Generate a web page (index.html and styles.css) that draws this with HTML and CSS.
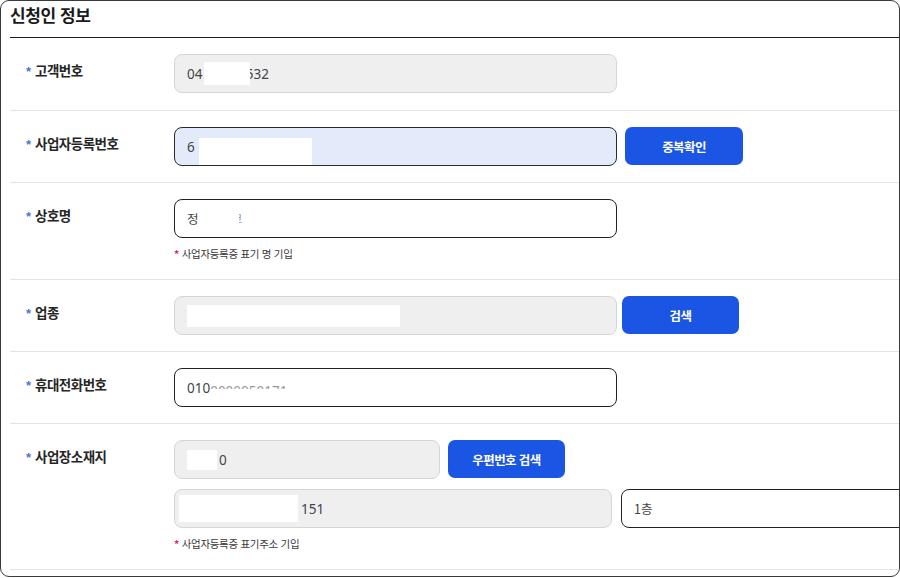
FILE: index.html
```html
<!DOCTYPE html>
<html lang="ko">
<head>
<meta charset="utf-8">
<title>신청인 정보</title>
<link rel="stylesheet" href="styles.css">
</head>
<body>
<section class="card">
  <header class="card-head"><h2 class="title">신청인 정보</h2></header>

  <div class="row first">
    <div class="label"><span class="req">*</span>고객번호</div>
    <div class="fields">
      <div class="line">
        <div class="field gray w443"><span>04</span><span class="mask m1"></span><span class="sliver">5</span><span>32</span></div>
      </div>
    </div>
  </div>

  <div class="row">
    <div class="label"><span class="req">*</span>사업자등록번호</div>
    <div class="fields">
      <div class="line">
        <div class="field blue w443"><span>6</span><span class="mask m2"></span></div>
        <button class="btn b118 g8">중복확인</button>
      </div>
    </div>
  </div>

  <div class="row">
    <div class="label"><span class="req">*</span>상호명</div>
    <div class="fields">
      <div class="line">
        <div class="field white w443"><span class="kr">정</span><span class="gap40"></span><span class="sliver2">코</span></div>
      </div>
      <p class="help"><span class="star">*</span> 사업자등록증 표기 명 기입</p>
    </div>
  </div>

  <div class="row">
    <div class="label"><span class="req">*</span>업종</div>
    <div class="fields">
      <div class="line">
        <div class="field gray w443"><span class="mask m4"></span></div>
        <button class="btn b117 g5">검색</button>
      </div>
    </div>
  </div>

  <div class="row">
    <div class="label"><span class="req">*</span>휴대전화번호</div>
    <div class="fields">
      <div class="line">
        <div class="field white w443"><span>010</span><span class="topclip"><span>0000050171</span></span></div>
      </div>
    </div>
  </div>

  <div class="row">
    <div class="label"><span class="req">*</span>사업장소재지</div>
    <div class="fields">
      <div class="line">
        <div class="field gray w266"><span class="mask m6"></span><span>0</span></div>
        <button class="btn b117 g8">우편번호 검색</button>
      </div>
      <div class="line second">
        <div class="field gray w438 addr"><span class="mask m7"></span><span>151</span></div>
        <div class="field white w300 g9"><span class="kr">1층</span></div>
      </div>
      <p class="help"><span class="star">*</span> 사업자등록증 표기주소 기입</p>
    </div>
  </div>
</section>
</body>
</html>
```

FILE: styles.css
```css
* { box-sizing: border-box; }
html, body { margin: 0; padding: 0; background: #fff; }
body {
  font-family: "Noto Sans CJK KR", "Noto Sans", sans-serif;
  color: #222;
  width: 900px;
  height: 578px;
  overflow: hidden;
}
.card {
  width: 900px;
  height: 577px;
  border: 1px solid #3a3a3a;
  border-radius: 9px;
  padding-left: 9px;
  overflow: hidden;
  background: #fff;
}
.card-head {
  height: 37px;
  border-bottom: 1px solid #1e1e1e;
}
.title {
  margin: 0;
  font-size: 17px;
  font-weight: 700;
  line-height: 28px;
  letter-spacing: -0.4px;
  color: #1a1a1a;
}
.row {
  display: flex;
  border-bottom: 1px solid #e3e3e3;
  padding: 16px 0 16px 0;
}
.row.first { padding-bottom: 17px; }
.label {
  width: 164px;
  flex: none;
  padding-left: 16px;
  height: 39px;
  line-height: 32px;
  font-size: 13.5px;
  font-weight: 700;
  letter-spacing: -0.5px;
  color: #262626;
  white-space: nowrap;
}
.req {
  display: inline-block;
  color: #4a74dc;
  font-family: "Liberation Sans", sans-serif;
  font-size: 13px;
  font-weight: 700;
  vertical-align: 0;
  margin-right: 2px;
  width: 7px;
}
.fields { display: flex; flex-direction: column; flex: none; }
.line { display: flex; }
.line.second { margin-top: 10px; }
.field {
  height: 39px;
  border-radius: 8px;
  display: flex;
  align-items: center;
  padding-left: 12px;
  font-family: "Noto Sans", "Noto Sans CJK KR", sans-serif;
  font-size: 13.5px;
  color: #444;
  white-space: nowrap;
  flex: none;
  position: relative;
}
.field .kr { font-family: "Noto Sans CJK KR", sans-serif; font-size: 12.5px; }
.gray { background: #efeff0; border: 1px solid #d6d6d8; }
.white { background: #fff; border: 1px solid #222; }
.blue { background: #e3ebfb; border: 1px solid #2a2a2a; }
.w443 { width: 443px; }
.w438 { width: 438px; }
.w266 { width: 266px; }
.w300 { width: 300px; }
.g5 { margin-left: 5px; }
.g8 { margin-left: 8px; }
.g9 { margin-left: 9px; }
.mask { display: inline-block; background: #fff; flex: none; }
.m1 { width: 46px; height: 23px; margin-left: 2px; }
.m2 { width: 113px; height: 27px; margin-left: 4px; align-self: flex-end; }
.m4 { width: 213px; height: 22px; }
.m6 { width: 30px; height: 20px; margin-right: 2px; }
.addr { padding-left: 4px; }
.m7 { width: 119px; height: 27px; margin-right: 3px; }
.sliver { display: inline-block; width: 3px; overflow: hidden; direction: rtl; }
.gap40 { display: inline-block; width: 40px; }
.sliver2 {
  display: inline-block; width: 4px; overflow: hidden; direction: rtl;
  font-family: "Noto Sans CJK KR", sans-serif; font-size: 12px; color: #999;
}
.topclip {
  display: inline-block;
  height: 7px;
  overflow: hidden;
  align-self: center;
  margin-top: -5px;
  color: #9a9a9a;
  line-height: 18px;
}
.btn {
  height: 38px;
  border: none;
  border-radius: 7px;
  background: #1a55e3;
  color: #fff;
  font-family: "Noto Sans CJK KR", sans-serif;
  font-size: 12.5px;
  font-weight: 700;
  letter-spacing: -0.6px;
  flex: none;
  padding: 0;
  cursor: pointer;
}
.b118 { width: 118px; }
.b117 { width: 117px; }
.help {
  margin: 8px 0 2px 0;
  font-size: 10.5px;
  line-height: 15px;
  letter-spacing: -0.3px;
  color: #3a3a3a;
}
.star { color: #e0285a; font-weight: 700; }
```
